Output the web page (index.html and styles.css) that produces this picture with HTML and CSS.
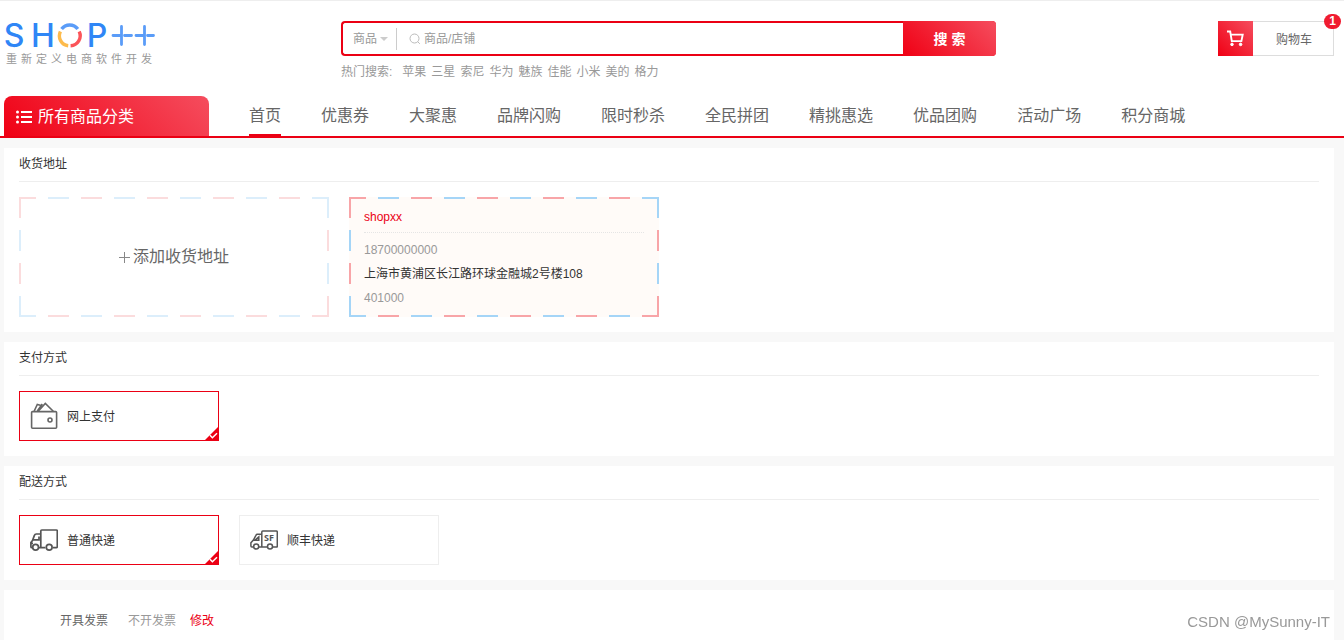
FILE: index.html
```html
<!DOCTYPE html>
<html lang="zh-CN">
<head>
<meta charset="utf-8">
<title>SHOP++</title>
<link rel="stylesheet" href="styles.css">
</head>
<body>
<header class="header">
  <div class="header-top">
    <a class="logo" href="#">
      <svg class="logo-mark" width="156" height="30" viewBox="0 0 156 30" role="img" aria-label="SHOP++">
        <g class="logo-letters">
          <text x="10" y="26">S</text>
          <text x="39" y="26">H</text>
          <text x="93" y="26">P</text>
        </g>
        <g fill="none" stroke-width="3.4">
          <path d="M57.6 8.1A10 10 0 0 1 73.8 8.1" stroke="#5a9cf8"/>
          <path d="M75.2 10.5A10 10 0 0 1 66.6 24.8" stroke="#fb5459"/>
          <path d="M64.2 24.8A10 10 0 0 1 56.4 10.5" stroke="#fdbb4c"/>
        </g>
        <g fill="none" stroke="#5a9cf8" stroke-width="2.8" stroke-linecap="round">
          <path d="M109 14.5h8M117.5 5.5v18M120.5 14.5h7"/>
          <path d="M132 14.5h8M140.5 5.5v18M143.5 14.5h6"/>
        </g>
      </svg>
      <span class="logo-tagline">重新定义电商软件开发</span>
    </a>
    <div class="search">
      <form class="search-form">
        <div class="search-type">
          <select aria-label="搜索类型"><option>商品</option><option>店铺</option></select>
          <svg width="8" height="4" viewBox="0 0 8 4" aria-hidden="true"><path d="M0 0h8L4 4z" fill="#ccc"/></svg>
        </div>
        <svg class="search-icon" width="13" height="13" viewBox="0 0 13 13" fill="none" stroke="#bbb" aria-hidden="true"><circle cx="5.5" cy="5.5" r="4.5"/><path d="M8.8 8.8l2 2"/></svg>
        <input class="search-input" type="text" placeholder="商品/店铺" aria-label="搜索">
        <button class="search-button" type="button">搜 索</button>
      </form>
      <div class="hot">
        <span class="hot-label">热门搜索:</span>
        <a href="#">苹果</a><a href="#">三星</a><a href="#">索尼</a><a href="#">华为</a><a href="#">魅族</a><a href="#">佳能</a><a href="#">小米</a><a href="#">美的</a><a href="#">格力</a>
      </div>
    </div>
    <a class="cart" href="#">
      <span class="cart-icon">
        <svg width="17" height="17" viewBox="0 0 17 17" fill="none" stroke="#fff" stroke-width="1.9" aria-hidden="true"><path d="M0 1.5h3.2l1.6 9.6h9.6l1.3-6.5H3.6"/><circle cx="5" cy="14.4" r="1.3" fill="#fff" stroke-width="1"/><circle cx="13.6" cy="14.4" r="1.3" fill="#fff" stroke-width="1"/></svg>
      </span>
      <span class="cart-label">购物车</span>
      <span class="cart-badge">1</span>
    </a>
  </div>
  <div class="nav">
    <a class="category" href="#">
      <svg width="17" height="14" viewBox="0 0 17 14" fill="#fff" aria-hidden="true"><path d="M5 1h11v2H5zM5 6h11v2H5zM5 11h11v2H5z"/><circle cx="1.5" cy="2" r="1.5"/><circle cx="1.5" cy="7" r="1.5"/><circle cx="1.5" cy="12" r="1.5"/></svg>
      所有商品分类
    </a>
    <nav class="nav-list">
      <a class="active" href="#">首页</a><a href="#">优惠券</a><a href="#">大聚惠</a><a href="#">品牌闪购</a><a href="#">限时秒杀</a><a href="#">全民拼团</a><a href="#">精挑惠选</a><a href="#">优品团购</a><a href="#">活动广场</a><a href="#">积分商城</a>
    </nav>
  </div>
</header>

<main class="main">
  <section class="panel">
    <h2 class="panel-title">收货地址</h2>
    <div class="panel-body">
      <button class="address address-add" type="button"><svg width="11" height="11" viewBox="0 0 11 11" aria-hidden="true"><path d="M0 5.5h11M5.5 0v11" stroke="#888"/></svg>添加收货地址</button>
      <div class="address address-selected">
        <div class="address-name">shopxx</div>
        <div class="address-muted">18700000000</div>
        <div>上海市黄浦区长江路环球金融城2号楼108</div>
        <div class="address-muted">401000</div>
      </div>
    </div>
  </section>

  <section class="panel">
    <h2 class="panel-title">支付方式</h2>
    <div class="panel-body">
      <label class="option">
        <input type="radio" name="payment" checked>
        <svg width="28" height="28" viewBox="0 0 28 28" fill="none" stroke="#666" stroke-width="1.6" aria-hidden="true"><rect x="1.6" y="9.6" width="25" height="16.6" rx="1"/><path d="M4 9.5L7.3 2.5l4 1M8 9.5L15.3 1.5 23.5 9.5M7.3 9l5-7"/><circle cx="20" cy="18" r="2"/></svg>
        <span class="option-label">网上支付</span>
        <svg class="tick" width="13" height="13" viewBox="0 0 13 13" aria-hidden="true"><path d="M13 0v13H0z" fill="#eb0014"/><path d="M5 8.3l2.4 2.4L12 6.3" fill="none" stroke="#fff" stroke-width="1.5"/></svg>
      </label>
    </div>
  </section>

  <section class="panel">
    <h2 class="panel-title">配送方式</h2>
    <div class="panel-body">
      <label class="option">
        <input type="radio" name="shipping" checked>
        <svg width="28" height="28" viewBox="0 0 28 28" fill="none" stroke="#555" stroke-width="1.7" aria-hidden="true"><path d="M10.8 5q0-1 1-1h14.5q1 0 1 1v15.7q0 1-1 1h-3.4M15.4 21.7H8.7M10.8 21.5V5M10.8 8H6.3q-1.4 0-2 1.6L2.5 14.5.9 16.5v4.2q0 1 1 1h.5M9 10.5v3.3H3.4M1 17.3h2"/><circle cx="5.6" cy="21.3" r="2.9"/><circle cx="19.2" cy="21.3" r="2.9"/></svg>
        <span class="option-label">普通快递</span>
        <svg class="tick" width="13" height="13" viewBox="0 0 13 13" aria-hidden="true"><path d="M13 0v13H0z" fill="#eb0014"/><path d="M5 8.3l2.4 2.4L12 6.3" fill="none" stroke="#fff" stroke-width="1.5"/></svg>
      </label>
      <label class="option">
        <input type="radio" name="shipping">
        <svg width="28" height="28" viewBox="0 0 28 28" fill="none" stroke="#555" stroke-width="1.5" aria-hidden="true"><path d="M11.8 20.5V6q0-1 1-1h13.5q1 0 1 1v14.1q0 1-1 1h-3.5M17 21.1H9M11.8 8.3H7.4q-1 0-1.5 1L3.4 14 .9 16.8v3.3q0 1 1 1h1.5M8.8 10.9v3.3H5z"/><circle cx="6.2" cy="20.6" r="2.5"/><circle cx="20" cy="20.6" r="2.5"/><text class="sf" x="14" y="15">SF</text></svg>
        <span class="option-label">顺丰快递</span>
        <svg class="tick" width="13" height="13" viewBox="0 0 13 13" aria-hidden="true"><path d="M13 0v13H0z" fill="#eb0014"/><path d="M5 8.3l2.4 2.4L12 6.3" fill="none" stroke="#fff" stroke-width="1.5"/></svg>
      </label>
    </div>
  </section>

  <section class="panel invoice">
    <span class="invoice-title">开具发票</span>
    <span class="invoice-value">不开发票</span>
    <a class="invoice-edit" href="#">修改</a>
  </section>
</main>
<div class="watermark">CSDN @MySunny-IT</div>
</body>
</html>
```

FILE: styles.css
```css
:root {
  --red: #eb0014;
  --gradient: linear-gradient(45deg, #f00014, #f54d5e);
}

* {
  box-sizing: border-box;
}

body {
  margin: 0;
  min-height: 100vh;
  display: flex;
  flex-direction: column;
  background: #f8f8f8;
  color: #333;
  font: 12px/24px "Liberation Sans", "Noto Sans CJK SC", sans-serif;
}

a {
  color: inherit;
  text-decoration: none;
}

svg {
  flex: none;
}

button,
input,
select {
  font: inherit;
  color: inherit;
}

.header {
  background: #fff;
  border-top: 1px solid #eee;
  border-bottom: 2px solid var(--red);
}

.header-top {
  display: grid;
  grid-template-columns: 337px minmax(400px, 655px) 1fr;
  align-items: start;
  height: 95px;
  margin: 0 10px 0 4px;
  padding-top: 20px;
}

.logo {
  display: flex;
  flex-direction: column;
}

.logo-mark {
  overflow: visible;
}

.logo-letters {
  font: 500 32px Inter, sans-serif;
  fill: #2f86f6;
  text-anchor: middle;
}

.logo-tagline {
  padding-left: 2px;
  color: #999;
  font-size: 11px;
  line-height: 16px;
  letter-spacing: 4px;
}

.search-form {
  display: flex;
  align-items: center;
  height: 35px;
  border: 2px solid var(--red);
  border-right: 0;
  border-radius: 4px;
}

.search-type {
  display: flex;
  align-items: center;
  width: 54px;
  height: 22px;
  padding-left: 10px;
  border-right: 1px solid #ccc;
}

.search-type select {
  appearance: none;
  width: 27px;
  padding: 0;
  border: 0;
  background: none;
  color: #999;
}

.search-icon {
  margin: 1px 2px 0 12px;
}

.search-input {
  flex: 1;
  min-width: 0;
  height: 31px;
  padding: 0;
  border: 0;
  outline: 0;
  background: none;
}

.search-input::placeholder {
  color: #999;
  opacity: 1;
}

.search-button {
  width: 93px;
  height: 35px;
  margin: -2px 0;
  border: 0;
  border-radius: 0 4px 4px 0;
  background: var(--gradient);
  color: #fff;
  font-size: 14px;
  font-weight: bold;
}

.hot {
  display: flex;
  gap: 5px;
  padding-top: 4px;
  color: #999;
}

.hot-label {
  margin-right: 5px;
}

.cart {
  position: relative;
  display: flex;
  justify-self: end;
  width: 116px;
  height: 35px;
  color: #666;
}

.cart-icon {
  display: grid;
  place-items: center;
  width: 35px;
  background: var(--gradient);
}

.cart-label {
  flex: 1;
  padding: 1px 0 0 2px;
  border: 1px solid #ddd;
  border-left: 0;
  line-height: 35px;
  text-align: center;
}

.cart-badge {
  position: absolute;
  top: -7px;
  right: -7px;
  width: 17px;
  height: 15px;
  border-radius: 8px;
  background: #f01c30;
  color: #fff;
  font-weight: bold;
  line-height: 15px;
  text-align: center;
}

.nav {
  display: flex;
  height: 40px;
  margin: 0 10px 0 4px;
  gap: 40px;
  font-size: 16px;
  white-space: nowrap;
}

.category {
  display: flex;
  align-items: center;
  gap: 5px;
  width: 205px;
  padding: 2px 12px 0;
  border-radius: 8px 8px 0 0;
  background: var(--gradient);
  color: #fff;
}

.nav-list {
  display: flex;
  gap: 40px;
  color: #666;
  line-height: 36px;
}

.nav-list a {
  padding-top: 2px;
}

.nav-list .active {
  border-bottom: 2px solid var(--red);
}

.main {
  display: flex;
  flex: 1;
  flex-direction: column;
  gap: 10px;
  padding: 10px 10px 0 4px;
}

.panel {
  padding: 0 15px;
  background: #fff;
}

.panel-title {
  margin: 0;
  border-bottom: 1px solid #eee;
  font-size: 12px;
  font-weight: normal;
  line-height: 33px;
}

.panel-body {
  display: flex;
  flex-wrap: wrap;
  gap: 20px;
  padding: 15px 0;
}

.address {
  --warm: #fbdcdd;
  --cool: #dceefb;
  width: 310px;
  height: 120px;
  padding: 8px 15px;
  border: 0;
  background:
    repeating-linear-gradient(90deg, var(--warm) 0 17px, transparent 17px 29px, var(--cool) 29px 50px, transparent 50px 62px, var(--warm) 62px 66px) top / 100% 2px no-repeat,
    repeating-linear-gradient(90deg, var(--cool) 0 17px, transparent 17px 29px, var(--warm) 29px 50px, transparent 50px 62px, var(--cool) 62px 66px) bottom / 100% 2px no-repeat,
    repeating-linear-gradient(var(--warm) 0 21px, transparent 21px 33px, var(--cool) 33px 54px, transparent 54px 66px) left / 2px 100% no-repeat,
    repeating-linear-gradient(var(--cool) 0 21px, transparent 21px 33px, var(--warm) 33px 54px, transparent 54px 66px) right / 2px 100% no-repeat;
}

.address-add {
  display: flex;
  align-items: center;
  justify-content: center;
  gap: 3px;
  color: #666;
  font-size: 16px;
}

.address-selected {
  --warm: #f8a5a8;
  --cool: #a5d5f7;
  background-color: #fffbf8;
}

.address-name {
  margin-bottom: 5px;
  padding-bottom: 3px;
  border-bottom: 1px dotted #e5e5e5;
  color: var(--red);
}

.address-muted {
  color: #999;
}

.option {
  position: relative;
  display: flex;
  align-items: center;
  gap: 9px;
  width: 200px;
  height: 50px;
  padding: 0 10px;
  border: 1px solid #eee;
}

.option input {
  position: absolute;
  opacity: 0;
}

.option:has(input:checked) {
  border-color: var(--red);
}

.option-label {
  padding-top: 2px;
}

.tick {
  position: absolute;
  right: 0;
  bottom: 0;
  display: none;
}

.option input:checked ~ .tick {
  display: block;
}

.sf {
  fill: #555;
  stroke: none;
  font: bold 9px "Open Sans", sans-serif;
}

.invoice {
  display: flex;
  flex: 1;
  padding: 19px 56px 8px;
}

.invoice-title {
  margin-right: 20px;
  color: #666;
}

.invoice-value {
  margin-right: 14px;
  color: #999;
}

.invoice-edit {
  color: var(--red);
}

.watermark {
  position: fixed;
  right: 14px;
  bottom: 6px;
  color: #999;
  font-size: 15px;
  text-shadow: 1px 1px 0 #fff;
}
```
